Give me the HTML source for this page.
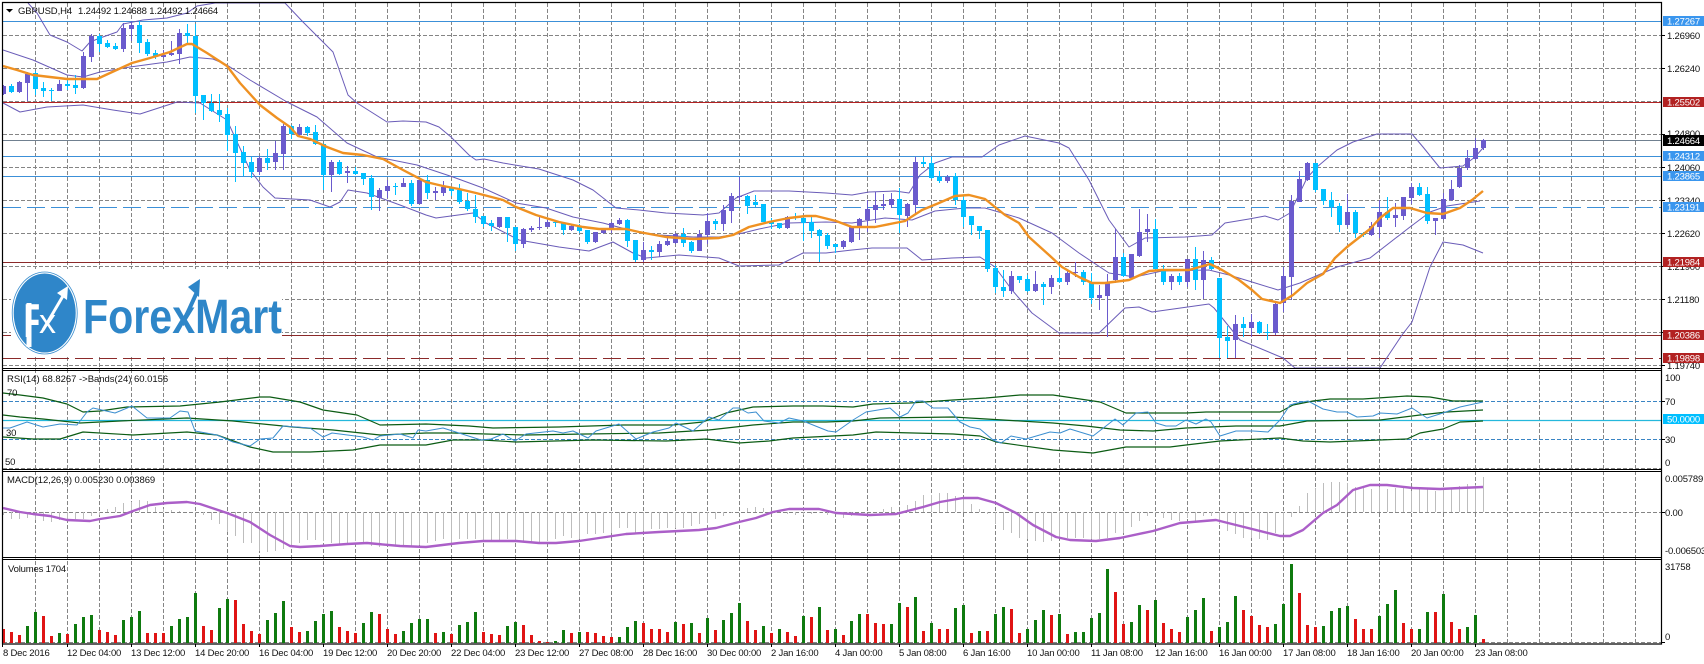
<!DOCTYPE html>
<html><head><meta charset="utf-8"><title>GBPUSD,H4</title>
<style>
html,body{margin:0;padding:0;background:#fff;width:1704px;height:664px;overflow:hidden}
svg{display:block}
text{font-family:"Liberation Sans",sans-serif;font-size:9.5px;letter-spacing:-.2px;fill:#111}
.w{fill:#fff}
.p{fill:none;stroke-linejoin:round}
</style></head><body>
<svg width="1704" height="664" viewBox="0 0 1704 664" xmlns="http://www.w3.org/2000/svg">
<defs>
<clipPath id="c1"><rect x="3" y="3" width="1658" height="365"/></clipPath>
<clipPath id="c2"><rect x="3" y="371" width="1658" height="98"/></clipPath>
<clipPath id="c3"><rect x="3" y="472" width="1658" height="85"/></clipPath>
<clipPath id="c4"><rect x="3" y="560" width="1658" height="84"/></clipPath>
</defs>
<rect width="1704" height="664" fill="#fff"/>

<!-- grid -->
<g stroke="#858585" stroke-width="1" stroke-dasharray="4 2" fill="none">
<path d="M3 35.5H1662M3 68.5H1662M3 101.5H1662M3 134.5H1662M3 167.5H1662M3 200.5H1662M3 233.5H1662M3 266.5H1662M3 299.5H1662M3 332.5H1662M3 365.5H1662"/>
<path d="M3 468.5H1662M3 512.5H1662M3 642.5H1662"/>
<path d="M35.5 3V644M67.5 3V644M99.5 3V644M131.5 3V644M163.5 3V644M195.5 3V644M227.5 3V644M259.5 3V644M291.5 3V644M323.5 3V644M355.5 3V644M387.5 3V644M419.5 3V644M451.5 3V644M483.5 3V644M515.5 3V644M547.5 3V644M579.5 3V644M611.5 3V644M643.5 3V644M675.5 3V644M707.5 3V644M739.5 3V644M771.5 3V644M803.5 3V644M835.5 3V644M867.5 3V644M899.5 3V644M931.5 3V644M963.5 3V644M995.5 3V644M1027.5 3V644M1059.5 3V644M1091.5 3V644M1123.5 3V644M1155.5 3V644M1187.5 3V644M1219.5 3V644M1251.5 3V644M1283.5 3V644M1315.5 3V644M1347.5 3V644M1379.5 3V644M1411.5 3V644M1443.5 3V644M1475.5 3V644M1507.5 3V644M1539.5 3V644M1571.5 3V644M1603.5 3V644M1635.5 3V644"/>
</g>

<!-- levels -->
<g fill="none" stroke-width="1">
<path d="M3 21.5H1662M3 156.5H1662M3 176.5H1662" stroke="#3c90d8"/>
<path d="M3 140.5H1662" stroke="#708090"/>
<path d="M3 102.5H1662" stroke="#b22222"/>
<path d="M3 262.5H1662M3 335.5H1662" stroke="#8b2a2a"/>
<path d="M3 207.5H1662" stroke="#3c90d8" stroke-dasharray="18 6"/>
<path d="M3 358.5H1662" stroke="#8b2a2a" stroke-dasharray="18 6"/>
</g>

<g clip-path="url(#c1)">
<!-- Bollinger -->
<g class="p" stroke="#6a5cb8" stroke-width="1">
<path d="M28 3L37 13L50 35L67 42L82 51L90 42L100 38L117 32L123 24L143 20L167 18L187 13L197 6L215 3L285 3L303 22L323 42L333 52L348 95L357 103L387 122L403 121L426 122L439 127L451 137L469 155L476 160L484 159L503 163L539 169L573 180L593 190L616 208L639 210L666 213L703 215L719 213L726 207L736 198L754 191L789 191L826 193L852 195L869 192L895 191L909 193L920 175L935 163L952 157L982 157L999 145L1025 136L1059 143L1069 148L1089 180L1109 220L1129 247L1145 238L1185 237L1212 235L1225 223L1249 219L1265 216L1278 220L1290 213L1307 178L1317 167L1337 150L1353 142L1377 134L1412 134L1423 147L1440 168L1463 166L1475 157L1483 148"/>
<path d="M3 50L33 60L67 75L83 77L100 72L130 67L167 62L190 57L213 59L227 65L250 80L287 102L317 117L347 143L377 157L417 165L426 168L453 177L483 188L516 203L546 208L573 217L603 223L633 231L659 235L693 237L719 237L743 233L759 229L789 223L826 222L852 223L885 218L912 220L935 211L965 208L985 208L1019 218L1052 233L1079 253L1109 273L1135 277L1162 271L1209 270L1229 275L1252 282L1278 290L1300 283L1323 273L1337 267L1370 258L1410 227L1430 212L1447 206L1480 201"/>
<path d="M3 103L20 112L47 107L83 105L113 110L140 114L177 102L200 103L227 120L250 170L263 187L275 198L310 200L330 207L340 202L348 190L367 193L400 205L426 215L436 218L473 213L486 223L519 240L559 247L589 251L613 242L633 253L646 258L679 255L719 258L739 266L779 265L803 253L826 253L852 250L872 248L907 248L922 260L952 258L980 257L995 267L1012 290L1032 313L1059 333L1099 333L1125 308L1139 307L1152 312L1209 304L1214 308L1240 340L1283 358L1295 368L1380 368L1402 335L1412 322L1430 267L1443 242L1463 245L1483 253"/>
</g>
<!-- candles wick: purple -->
<path fill="none" stroke="#6a5acd" stroke-width="1" d="M3.5 85V95M19.5 81V93M27.5 72V101M59.5 80V91M83.5 52V89M91.5 34V62M123.5 23V52M131.5 21V41M163.5 50V58M171.5 41V56M179.5 29V64M259.5 156V175M275.5 141V170M283.5 124V170M299.5 124V136M331.5 160V192M347.5 166V183M379.5 188V211M387.5 180V198M403.5 178V187M419.5 178V204M435.5 187V200M443.5 181V196M499.5 217V228M523.5 228V248M531.5 226V232M539.5 217V230M547.5 220V227M571.5 224V231M595.5 232V243M603.5 228V234M611.5 222V233M619.5 218V225M643.5 242V262M659.5 241V257M667.5 238V246M675.5 233V244M699.5 230V251M707.5 213V244M723.5 205V231M731.5 193V223M739.5 177V203M787.5 216V229M843.5 240V249M851.5 226V243M859.5 218V240M867.5 200V232M875.5 192V223M883.5 194V210M891.5 193V208M907.5 203V227M915.5 157V213M947.5 175V183M1011.5 271V294M1035.5 271V292M1051.5 275V294M1067.5 270V285M1075.5 262V277M1099.5 285V310M1107.5 274V337M1115.5 229V283M1131.5 254V278M1139.5 209V257M1147.5 214V242M1171.5 274V290M1187.5 259V287M1203.5 251V299M1235.5 315V358M1251.5 314V337M1275.5 302V335M1283.5 267V312M1291.5 195V300M1299.5 171V202M1307.5 162V181M1347.5 194V227M1371.5 222V236M1379.5 200V238M1395.5 203V227M1403.5 197V220M1411.5 183V204M1435.5 218V235M1443.5 193V220M1451.5 180V201M1459.5 165V188M1467.5 150V170M1475.5 138V160M1483.5 139V150"/>
<!-- candles body: purple -->
<path fill="none" stroke="#6a5acd" stroke-width="5" d="M3.5 86V94M19.5 82V92M27.5 74V83M59.5 84V91M83.5 56V88M91.5 36V57M123.5 28V49M131.5 25V29M163.5 55V57M171.5 53V55M179.5 33V54M259.5 158V172M275.5 153V162M283.5 126V154M299.5 127V135M331.5 162V175M347.5 171V173M379.5 190V198M387.5 186V191M403.5 183V187M419.5 180V204M435.5 191V193M443.5 187V193M499.5 217V227M523.5 229V244M531.5 228V230M539.5 227V228M547.5 222V227M571.5 226V230M595.5 232V242M603.5 230V233M611.5 223V228M619.5 220V224M643.5 250V260M659.5 244V252M667.5 241V245M675.5 234V243M699.5 234V251M707.5 221V235M723.5 210V224M731.5 196V211M739.5 196V197M787.5 217V228M843.5 241V247M851.5 227V242M859.5 219V227M867.5 209V220M875.5 205V210M883.5 204V206M891.5 199V205M907.5 204V216M915.5 162V205M947.5 177V181M1011.5 276V291M1035.5 284V291M1051.5 278V287M1067.5 273V282M1075.5 272V273M1099.5 295V298M1107.5 282V296M1115.5 257V280M1131.5 254V278M1139.5 232V256M1147.5 229V232M1171.5 276V282M1187.5 259V282M1203.5 260V280M1235.5 324V340M1251.5 322V328M1275.5 304V333M1283.5 276V303M1291.5 201V277M1299.5 179V202M1307.5 163V180M1347.5 212V225M1371.5 226V235M1379.5 212V227M1395.5 215V218M1403.5 197V216M1411.5 187V198M1435.5 218V221M1443.5 199V219M1451.5 189V200M1459.5 168V187M1467.5 158V168M1475.5 148V159M1483.5 140V148"/>
<!-- candles wick: cyan -->
<path fill="none" stroke="#00bfff" stroke-width="1" d="M11.5 84V93M35.5 71V95M43.5 82V97M51.5 88V101M67.5 80V90M75.5 75V94M99.5 34V52M107.5 40V48M115.5 43V50M139.5 21V53M147.5 39V56M155.5 50V59M187.5 24V45M195.5 24V113M203.5 95V120M211.5 94V112M219.5 94V122M227.5 108V151M235.5 126V182M243.5 146V176M251.5 157V178M267.5 149V170M291.5 125V139M307.5 126V136M315.5 125V145M323.5 143V190M339.5 160V175M355.5 167V175M363.5 173V185M371.5 175V210M395.5 183V195M411.5 180V206M427.5 175V199M451.5 187V196M459.5 184V204M467.5 193V211M475.5 195V223M483.5 216V227M491.5 220V231M507.5 217V242M515.5 227V251M555.5 221V227M563.5 222V235M579.5 224V233M587.5 230V244M627.5 219V247M635.5 240V262M651.5 246V260M683.5 228V247M691.5 241V253M715.5 219V230M747.5 195V214M755.5 195V207M763.5 204V222M771.5 218V229M779.5 223V229M795.5 213V220M803.5 215V241M811.5 215V238M819.5 229V262M827.5 233V249M835.5 244V253M899.5 188V233M923.5 157V167M931.5 157V179M939.5 171V183M955.5 173V205M963.5 195V227M971.5 216V235M979.5 226V239M987.5 230V272M995.5 265V293M1003.5 270V297M1019.5 276V283M1027.5 275V292M1043.5 282V305M1059.5 267V283M1083.5 270V285M1091.5 273V304M1123.5 253V277M1155.5 219V270M1163.5 265V285M1179.5 273V285M1195.5 247V290M1211.5 257V270M1219.5 278V358M1227.5 326V358M1243.5 317V337M1259.5 321V334M1267.5 324V340M1315.5 163V192M1323.5 189V205M1331.5 192V217M1339.5 203V232M1355.5 210V238M1363.5 232V237M1387.5 197V220M1419.5 183V196M1427.5 187V224"/>
<!-- candles body: cyan -->
<path fill="none" stroke="#00bfff" stroke-width="5" d="M11.5 86V92M35.5 73V89M43.5 88V91M51.5 90V91M67.5 84V86M75.5 85V88M99.5 36V44M107.5 43V47M115.5 46V49M139.5 25V43M147.5 42V54M155.5 53V56M187.5 33V36M195.5 36V96M203.5 95V103M211.5 103V111M219.5 110V115M227.5 114V135M235.5 134V153M243.5 152V163M251.5 162V172M267.5 158V163M291.5 126V134M307.5 127V133M315.5 132V144M323.5 144V175M339.5 162V174M355.5 171V174M363.5 173V179M371.5 178V197M395.5 186V187M411.5 183V204M427.5 180V193M451.5 187V191M459.5 190V202M467.5 201V209M475.5 209V217M483.5 216V224M491.5 223V226M507.5 217V228M515.5 227V244M555.5 222V223M563.5 223V230M579.5 227V231M587.5 230V242M627.5 220V241M635.5 240V260M651.5 250V252M683.5 234V243M691.5 242V251M715.5 221V224M747.5 196V206M755.5 202V205M763.5 204V222M771.5 222V224M779.5 223V228M795.5 217V218M803.5 218V223M811.5 222V231M819.5 230V236M827.5 235V246M835.5 244V247M899.5 199V215M923.5 162V164M931.5 163V178M939.5 177V181M955.5 176V200M963.5 200V217M971.5 216V225M979.5 226V231M987.5 230V269M995.5 268V287M1003.5 287V291M1019.5 276V280M1027.5 279V291M1043.5 284V287M1059.5 278V282M1083.5 272V282M1091.5 282V298M1123.5 257V276M1155.5 229V269M1163.5 269V282M1179.5 276V282M1195.5 259V280M1211.5 260V269M1219.5 278V338M1227.5 337V341M1243.5 324V328M1259.5 322V333M1267.5 332V333M1315.5 163V190M1323.5 189V201M1331.5 200V207M1339.5 206V225M1355.5 212V233M1363.5 233V235M1387.5 212V218M1419.5 187V195M1427.5 194V221"/>
<!-- MA -->
<path class="p" stroke="#ef9122" stroke-width="2.4" d="M3 66L17 70L33 75L50 77L67 79L97 79L110 73L132 63L150 58L170 52L187 44L192 44L207 53L227 66L240 83L260 105L277 118L290 127L298 136L310 139L327 147L343 153L363 155L383 159L403 170L426 182L443 186L459 189L476 193L503 200L516 207L536 215L559 222L583 227L599 229L626 229L639 232L666 237L693 239L719 238L733 235L749 227L769 222L789 218L806 216L816 216L836 221L852 227L875 227L905 221L922 210L939 203L955 196L969 195L985 199L1005 215L1019 223L1029 237L1049 255L1062 267L1079 277L1092 283L1105 283L1129 280L1149 271L1162 270L1189 270L1210 264L1222 270L1239 280L1252 290L1262 299L1280 303L1293 295L1307 283L1323 274L1335 258L1347 247L1370 229L1380 218L1393 208L1410 208L1427 213L1443 214L1460 208L1472 200L1483 191"/>

<!-- logo -->
<rect x="11" y="269" width="271" height="86" fill="#fff"/>
<ellipse cx="44.7" cy="313" rx="32.5" ry="41" fill="none" stroke="#3a8ecf" stroke-width=".8"/>
<ellipse cx="44.7" cy="313" rx="31" ry="39.5" fill="#2f86c9"/>
<rect x="26.5" y="303" width="5" height="44" fill="#fff"/>
<text transform="translate(24,337) scale(.55,1)" style="font-size:47px;font-weight:700;letter-spacing:0;fill:#fff">F</text>
<text x="39" y="333" style="font-size:34px;letter-spacing:0;fill:#fff">x</text>
<path d="M43 330L63 296" stroke="#fff" stroke-width="3" fill="none"/>
<path d="M57 293L68 286L67 300Z" fill="#fff"/>
<text x="83" y="333" textLength="199" lengthAdjust="spacingAndGlyphs" style="font-size:48px;font-weight:700;letter-spacing:0;fill:#2e86c8">ForexMart</text>
<path d="M182 325L197 292" stroke="#2e86c8" stroke-width="4" fill="none"/>
<path d="M188 287L200 279L199 297Z" fill="#2e86c8"/>
</g>

<!-- RSI -->
<g fill="none" stroke-width="1">
<path d="M3 401.5H1662M3 439.5H1662" stroke="#3a85c4" stroke-dasharray="4 2"/>
<path d="M3 420.5H1662" stroke="#25b8dc" stroke-width="1.2"/>
</g>
<g clip-path="url(#c2)">
<g class="p" stroke="#0c5c14" stroke-width="1.2">
<path d="M3 393L20 395L43 398L67 404L83 412L100 411L127 407L180 406L220 402L260 397L270 397L300 402L323 410L357 415L380 425L426 424L469 426L493 428L559 427L623 425L673 425L703 422L726 413L753 407L793 406L823 406L853 407L873 404L910 403L953 400L986 398L1020 395L1053 395L1080 399L1100 402L1126 413L1186 413L1206 412L1280 412L1293 405L1313 401L1330 399L1363 399L1407 396L1430 397L1453 401L1483 401"/>
<path d="M3 415L20 417L43 419L80 423L120 421L187 418L233 421L293 427L333 430L380 435L426 433L453 433L486 434L526 435L586 434L659 433L709 430L753 425L793 422L826 422L853 421L880 418L953 417L1003 420L1053 423L1086 426L1120 430L1153 431L1186 428L1236 426L1280 426L1307 421L1380 420L1420 415L1447 412L1483 410"/>
<path d="M3 437L33 439L60 439L83 432L133 435L187 432L217 435L250 447L273 452L310 452L353 450L380 445L426 445L453 440L483 440L516 442L593 440L666 441L706 439L739 443L769 441L793 438L853 435L876 432L953 434L980 436L996 442L1053 450L1093 453L1126 447L1170 447L1186 445L1220 441L1280 438L1303 441L1330 442L1380 440L1407 439L1420 433L1443 429L1460 422L1483 421"/>
</g>
<path class="p" stroke="#3c8fd0" stroke-width="1" d="M3 428L10 428L27 422L43 427L60 424L77 425L87 412L93 408L115 413L132 406L147 418L170 418L180 411L188 412L195 431L217 435L233 442L250 446L260 439L273 438L283 426L310 428L323 437L332 433L363 437L373 440L380 436L400 434L413 438L418 430L426 431L443 428L459 433L481 440L491 439L503 434L515 441L526 434L553 431L563 433L573 431L588 438L596 431L619 424L636 439L653 432L669 428L676 423L693 431L709 417L719 420L733 408L739 408L748 413L756 412L764 421L779 423L789 418L803 421L828 431L836 432L853 420L866 412L890 408L900 417L908 413L916 401L923 401L933 408L948 408L960 422L970 427L980 429L993 440L1001 443L1011 436L1026 439L1050 432L1060 433L1070 429L1093 436L1115 419L1123 425L1136 413L1148 412L1156 423L1166 426L1176 426L1186 420L1196 424L1206 419L1211 422L1220 436L1236 431L1253 431L1268 432L1280 420L1290 405L1297 403L1308 401L1323 409L1337 412L1347 412L1357 417L1373 416L1380 413L1397 414L1412 408L1427 418L1443 413L1460 407L1483 402"/>
</g>

<!-- MACD -->
<g clip-path="url(#c3)">
<path fill="none" stroke="#bdbdbd" stroke-width="1" d="M3.5 512v3M11.5 512v7M19.5 512v7M27.5 512v6M35.5 512v8M43.5 512v9M51.5 512v10M59.5 512v8M67.5 512v8M75.5 512v7M83.5 512v7M91.5 512v4M99.5 512v3M107.5 512v-3M115.5 512v-5M123.5 512v-9M131.5 512v-10M139.5 512v-12M147.5 512v-11M155.5 512v-5M163.5 512v-3M171.5 512v-2M179.5 512v-1M195.5 512v1M203.5 512v3M211.5 512v8M219.5 512v12M227.5 512v20M235.5 512v24M243.5 512v31M251.5 512v31M259.5 512v39M267.5 512v40M275.5 512v39M283.5 512v37M291.5 512v33M299.5 512v31M307.5 512v28M315.5 512v28M323.5 512v29M331.5 512v31M339.5 512v33M347.5 512v31M355.5 512v29M363.5 512v31M371.5 512v34M379.5 512v35M387.5 512v34M395.5 512v34M403.5 512v34M411.5 512v34M419.5 512v33M427.5 512v31M435.5 512v29M443.5 512v27M451.5 512v32M459.5 512v27M467.5 512v27M475.5 512v27M483.5 512v29M491.5 512v29M499.5 512v29M507.5 512v27M515.5 512v29M523.5 512v29M531.5 512v31M539.5 512v31M547.5 512v29M555.5 512v27M563.5 512v24M571.5 512v26M579.5 512v27M587.5 512v22M595.5 512v22M603.5 512v21M611.5 512v21M619.5 512v16M627.5 512v16M635.5 512v21M643.5 512v19M651.5 512v17M659.5 512v17M667.5 512v16M675.5 512v16M683.5 512v16M691.5 512v14M699.5 512v12M707.5 512v11M715.5 512v7M723.5 512v4M731.5 512v1M747.5 512v-4M755.5 512v-5M763.5 512v-4M787.5 512v2M795.5 512v3M803.5 512v3M811.5 512v2M819.5 512v1M827.5 512v3M835.5 512v1M843.5 512v6M851.5 512v4M883.5 512v-3M891.5 512v-5M899.5 512v-1M907.5 512v-7M915.5 512v-11M923.5 512v-17M931.5 512v-17M939.5 512v-19M947.5 512v-19M955.5 512v-16M963.5 512v-14M971.5 512v-8M979.5 512v-3M987.5 512v2M995.5 512v12M1003.5 512v18M1011.5 512v21M1019.5 512v26M1027.5 512v27M1035.5 512v29M1043.5 512v30M1051.5 512v29M1059.5 512v26M1067.5 512v26M1075.5 512v26M1083.5 512v26M1091.5 512v27M1099.5 512v27M1107.5 512v26M1115.5 512v21M1123.5 512v21M1131.5 512v15M1139.5 512v9M1147.5 512v4M1155.5 512v1M1163.5 512v6M1171.5 512v8M1179.5 512v9M1187.5 512v6M1195.5 512v9M1203.5 512v4M1211.5 512v4M1219.5 512v12M1227.5 512v19M1235.5 512v22M1243.5 512v26M1251.5 512v26M1259.5 512v27M1267.5 512v28M1275.5 512v21M1283.5 512v21M1291.5 512v5M1299.5 512v-6M1307.5 512v-19M1315.5 512v-24M1323.5 512v-29M1331.5 512v-30M1339.5 512v-30M1347.5 512v-29M1355.5 512v-25M1363.5 512v-24M1371.5 512v-23M1379.5 512v-25M1387.5 512v-23M1395.5 512v-24M1403.5 512v-24M1411.5 512v-21M1419.5 512v-24M1427.5 512v-24M1435.5 512v-21M1443.5 512v-24M1451.5 512v-23M1459.5 512v-26M1467.5 512v-28M1475.5 512v-27M1483.5 512v-35"/>
<path class="p" stroke="#ab5fc8" stroke-width="2.4" d="M3 508L20 512L33 514L50 516L67 520L90 521L100 519L120 516L133 511L150 505L167 503L187 502L200 504L227 513L250 522L270 535L290 546L300 547L320 546L347 544L367 543L400 546L426 547L459 543L483 541L516 541L539 543L556 543L579 541L626 534L659 532L699 530L716 528L739 522L756 518L773 512L789 509L819 509L836 513L853 514L870 515L896 514L923 507L940 502L963 498L978 498L996 503L1016 513L1033 525L1056 537L1070 540L1096 541L1120 538L1153 531L1180 523L1216 520L1236 525L1280 536L1290 536L1303 530L1323 513L1337 505L1353 490L1370 485L1387 485L1413 488L1440 489L1460 488L1483 487"/>
</g>

<!-- Volumes -->
<g clip-path="url(#c4)">
<path fill="none" stroke="#0f7a0f" stroke-width="3" d="M27.5 643v-17M35.5 643v-31M59.5 643v-10M75.5 643v-19M83.5 643v-26M91.5 643v-28M123.5 643v-23M131.5 643v-26M139.5 643v-32M171.5 643v-17M179.5 643v-24M187.5 643v-26M195.5 643v-50M219.5 643v-35M227.5 643v-44M267.5 643v-23M275.5 643v-30M283.5 643v-42M307.5 643v-12M315.5 643v-22M323.5 643v-29M331.5 643v-32M363.5 643v-20M371.5 643v-31M403.5 643v-12M411.5 643v-20M419.5 643v-24M427.5 643v-24M443.5 643v-11M459.5 643v-18M467.5 643v-21M475.5 643v-31M507.5 643v-17M515.5 643v-21M555.5 643v-2M563.5 643v-13M579.5 643v-11M619.5 643v-6M627.5 643v-16M635.5 643v-22M675.5 643v-21M691.5 643v-20M707.5 643v-25M723.5 643v-23M731.5 643v-30M739.5 643v-40M763.5 643v-17M779.5 643v-14M803.5 643v-27M819.5 643v-36M835.5 643v-14M851.5 643v-22M859.5 643v-29M891.5 643v-19M899.5 643v-40M915.5 643v-46M931.5 643v-20M955.5 643v-35M963.5 643v-38M979.5 643v-12M995.5 643v-29M1003.5 643v-36M1027.5 643v-14M1035.5 643v-23M1043.5 643v-33M1059.5 643v-29M1075.5 643v-11M1083.5 643v-11M1091.5 643v-25M1099.5 643v-30M1107.5 643v-74M1131.5 643v-21M1139.5 643v-38M1155.5 643v-43M1187.5 643v-26M1195.5 643v-33M1203.5 643v-45M1219.5 643v-16M1227.5 643v-21M1235.5 643v-47M1275.5 643v-19M1283.5 643v-39M1291.5 643v-79M1323.5 643v-17M1331.5 643v-32M1339.5 643v-35M1347.5 643v-37M1379.5 643v-27M1387.5 643v-39M1395.5 643v-53M1419.5 643v-14M1427.5 643v-31M1443.5 643v-49M1467.5 643v-16M1475.5 643v-28"/>
<path fill="none" stroke="#e01414" stroke-width="3" d="M3.5 643v-14M11.5 643v-11M19.5 643v-8M43.5 643v-27M51.5 643v-7M67.5 643v-9M99.5 643v-13M107.5 643v-11M115.5 643v-8M147.5 643v-10M155.5 643v-10M163.5 643v-10M203.5 643v-17M211.5 643v-13M235.5 643v-43M243.5 643v-19M251.5 643v-12M259.5 643v-9M291.5 643v-16M299.5 643v-11M339.5 643v-16M347.5 643v-12M355.5 643v-10M379.5 643v-29M387.5 643v-14M395.5 643v-9M435.5 643v-10M451.5 643v-9M483.5 643v-11M491.5 643v-9M499.5 643v-8M523.5 643v-18M531.5 643v-8M539.5 643v-2M547.5 643v-1M571.5 643v-10M587.5 643v-11M595.5 643v-10M603.5 643v-7M611.5 643v-6M643.5 643v-20M651.5 643v-14M659.5 643v-14M667.5 643v-11M683.5 643v-19M699.5 643v-10M715.5 643v-13M747.5 643v-22M755.5 643v-13M771.5 643v-10M787.5 643v-11M795.5 643v-7M811.5 643v-26M827.5 643v-13M843.5 643v-8M867.5 643v-29M875.5 643v-20M883.5 643v-19M907.5 643v-36M923.5 643v-12M939.5 643v-14M947.5 643v-14M971.5 643v-10M987.5 643v-12M1011.5 643v-34M1019.5 643v-10M1051.5 643v-28M1067.5 643v-9M1115.5 643v-51M1123.5 643v-19M1147.5 643v-33M1163.5 643v-20M1171.5 643v-14M1179.5 643v-11M1211.5 643v-12M1243.5 643v-33M1251.5 643v-27M1259.5 643v-18M1267.5 643v-16M1299.5 643v-50M1307.5 643v-18M1315.5 643v-16M1355.5 643v-24M1363.5 643v-14M1371.5 643v-14M1403.5 643v-20M1411.5 643v-14M1435.5 643v-31M1451.5 643v-21M1459.5 643v-14M1483.5 643v-4"/>
</g>

<!-- frames -->
<g fill="none" stroke="#000" stroke-width="1">
<path d="M2.5 2.5H1661.5V644H2.5Z" stroke-width="1.2"/>
<path d="M2 368.5H1662M2 370.5H1662M2 469.5H1662M2 471.5H1662M2 557.5H1662M2 559.5H1662"/>
</g>
<path d="M131.5 644v3M67.5 644v3M195.5 644v3M259.5 644v3M323.5 644v3M387.5 644v3M451.5 644v3M515.5 644v3M579.5 644v3M643.5 644v3M707.5 644v3M771.5 644v3M835.5 644v3M899.5 644v3M963.5 644v3M1027.5 644v3M1091.5 644v3M1155.5 644v3M1219.5 644v3M1283.5 644v3M1347.5 644v3M1411.5 644v3M1475.5 644v3M2.5 644v3" stroke="#000" fill="none"/>
<path d="M1662 35.5h3M1662 68.5h3M1662 134.5h3M1662 167.5h3M1662 200.5h3M1662 233.5h3M1662 266.5h3M1662 299.5h3M1662 332.5h3M1662 365.5h3M1662 401.5h3M1662 439.5h3M1662 512.5h3M1662 642.5h3" stroke="#000" fill="none"/>

<!-- header -->
<path d="M6 9H13L9.5 12.5Z" fill="#000"/>
<text x="18" y="14" textLength="54">GBPUSD,H4</text>
<text x="78" y="14" textLength="140">1.24492 1.24688 1.24492 1.24664</text>
<text x="7" y="382" textLength="161">RSI(14) 68.8267  -&gt;Bands(24) 60.0156</text>
<text x="7" y="396">70</text><text x="6" y="436">30</text><text x="5" y="465">50</text>
<text x="7" y="483" textLength="148">MACD(12,26,9) 0.005230 0.003869</text>
<text x="8" y="572" textLength="58">Volumes 1704</text>

<!-- right axis -->
<text x="1667" y="39">1.26960</text>
<text x="1667" y="72">1.26240</text>
<text x="1667" y="137">1.24800</text>
<text x="1667" y="171">1.24060</text>
<text x="1667" y="204">1.23340</text>
<text x="1667" y="237">1.22620</text>
<text x="1667" y="270">1.21900</text>
<text x="1667" y="303">1.21180</text>
<text x="1667" y="369">1.19740</text>
<text x="1665" y="381">100</text>
<text x="1665" y="405">70</text>
<text x="1665" y="443">30</text>
<text x="1665" y="466">0</text>
<text x="1665" y="482">0.005789</text>
<text x="1665" y="516">0.00</text>
<text x="1665" y="554">-0.006503</text>
<text x="1665" y="570">31758</text>
<text x="1665" y="640">0</text>

<!-- price boxes -->
<rect x="1663" y="16" width="41" height="10" fill="#3a96ee"/>
<rect x="1663" y="97" width="41" height="10" fill="#b22222"/>
<rect x="1663" y="135" width="41" height="11" fill="#000"/>
<rect x="1663" y="151" width="41" height="10" fill="#3a96ee"/>
<rect x="1663" y="171" width="41" height="10" fill="#3a96ee"/>
<rect x="1663" y="202" width="41" height="10" fill="#3a96ee"/>
<rect x="1663" y="257" width="41" height="10" fill="#b22222"/>
<rect x="1663" y="330" width="41" height="10" fill="#b22222"/>
<rect x="1663" y="353" width="41" height="10" fill="#b22222"/>
<rect x="1663" y="414" width="41" height="10" fill="#00bfff"/>
<g>
<text class="w" style="fill:#fff" x="1667" y="24.5">1.27267</text>
<text class="w" style="fill:#fff" x="1667" y="105.5">1.25502</text>
<text class="w" style="fill:#fff" x="1667" y="144">1.24664</text>
<text class="w" style="fill:#fff" x="1667" y="159.5">1.24312</text>
<text class="w" style="fill:#fff" x="1667" y="179.5">1.23865</text>
<text class="w" style="fill:#fff" x="1667" y="210.5">1.23191</text>
<text class="w" style="fill:#fff" x="1667" y="265.5">1.21984</text>
<text class="w" style="fill:#fff" x="1667" y="338.5">1.20386</text>
<text class="w" style="fill:#fff" x="1667" y="361.5">1.19898</text>
<text class="w" style="fill:#fff" x="1667" y="422.5">50.0000</text>
</g>

<!-- time axis -->
<g>
<text x="3" y="656">8 Dec 2016</text>
<text x="67" y="656">12 Dec 04:00</text>
<text x="131" y="656">13 Dec 12:00</text>
<text x="195" y="656">14 Dec 20:00</text>
<text x="259" y="656">16 Dec 04:00</text>
<text x="323" y="656">19 Dec 12:00</text>
<text x="387" y="656">20 Dec 20:00</text>
<text x="451" y="656">22 Dec 04:00</text>
<text x="515" y="656">23 Dec 12:00</text>
<text x="579" y="656">27 Dec 08:00</text>
<text x="643" y="656">28 Dec 16:00</text>
<text x="707" y="656">30 Dec 00:00</text>
<text x="771" y="656">2 Jan 16:00</text>
<text x="835" y="656">4 Jan 00:00</text>
<text x="899" y="656">5 Jan 08:00</text>
<text x="963" y="656">6 Jan 16:00</text>
<text x="1027" y="656">10 Jan 00:00</text>
<text x="1091" y="656">11 Jan 08:00</text>
<text x="1155" y="656">12 Jan 16:00</text>
<text x="1219" y="656">16 Jan 00:00</text>
<text x="1283" y="656">17 Jan 08:00</text>
<text x="1347" y="656">18 Jan 16:00</text>
<text x="1411" y="656">20 Jan 00:00</text>
<text x="1475" y="656">23 Jan 08:00</text>
</g>
</svg>
</body></html>
